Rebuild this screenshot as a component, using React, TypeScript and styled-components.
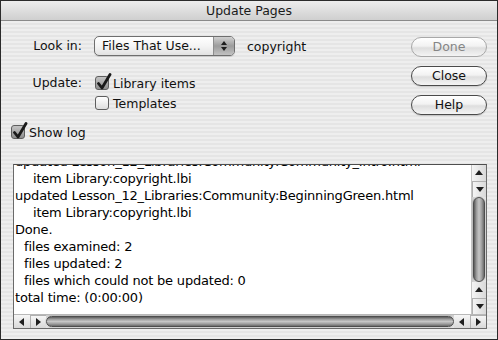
import styled, { createGlobalStyle } from "styled-components";

const GlobalStyle = createGlobalStyle`
  html, body {
    margin: 0;
    padding: 0;
    background: #ffffff;
  }
  body {
    font-family: "DejaVu Sans", "Liberation Sans", sans-serif;
  }
  * {
    box-sizing: border-box;
  }
`;

const Window = styled.div`
  width: 498px;
  height: 340px;
  border: 1px solid #2b2b2b;
  display: flex;
  flex-direction: column;
  overflow: hidden;
  color: #111;
  background: repeating-linear-gradient(
    to bottom,
    #eeeeee 0,
    #eeeeee 2px,
    #e5e5e5 2px,
    #e5e5e5 4px
  );
`;

const TitleBar = styled.div`
  flex: none;
  height: 20px;
  display: flex;
  align-items: center;
  justify-content: center;
  background: linear-gradient(to bottom, #ededed, #cfcfcf);
  border-bottom: 1px solid #8a8a8a;
  font-size: 12.5px;
  color: #1a1a1a;
`;

const Body = styled.div`
  flex: 1;
  display: flex;
  flex-direction: column;
  padding: 15px 10px 10px 10px;
  min-height: 0;
`;

const TopRow = styled.div`
  display: flex;
  justify-content: space-between;
  align-items: flex-start;
`;

const Form = styled.div`
  display: grid;
  grid-template-columns: 71px auto;
  column-gap: 12px;
  row-gap: 18px;
  align-items: start;
`;

const Label = styled.div<{ $h: number }>`
  text-align: right;
  font-size: 12.5px;
  line-height: ${p => p.$h}px;
  white-space: nowrap;
`;

const PopupRow = styled.div`
  display: flex;
  align-items: center;
  gap: 12px;
  height: 20px;
  font-size: 12.5px;
`;

const Popup = styled.div`
  width: 141px;
  height: 20px;
  display: flex;
  border: 1px solid #6e6e6e;
  border-radius: 5px;
  overflow: hidden;
  background: linear-gradient(to bottom, #ffffff 0%, #f4f4f4 50%, #e2e2e2 100%);
  box-shadow: 0 1px 0 rgba(0, 0, 0, 0.12);
`;

const PopupText = styled.div`
  flex: 1;
  padding-left: 7px;
  line-height: 18px;
  font-size: 12.5px;
  white-space: nowrap;
`;

const PopupArrows = styled.div`
  width: 21px;
  display: flex;
  flex-direction: column;
  align-items: center;
  justify-content: center;
  gap: 2px;
  border-left: 1px solid #8e8e8e;
  background: linear-gradient(to bottom, #d0d0d0 0%, #9c9c9c 50%, #c2c2c2 100%);
`;

const CheckGroup = styled.div`
  display: flex;
  flex-direction: column;
  gap: 2px;
  margin-left: 1px;
`;

const CheckRow = styled.div`
  display: flex;
  align-items: center;
  gap: 4px;
  height: 18px;
  font-size: 12.5px;
  white-space: nowrap;
`;

const Box = styled.div<{ $checked?: boolean }>`
  position: relative;
  width: 14px;
  height: 14px;
  border: 1px solid #5e5e5e;
  border-radius: 3px;
  background: ${p =>
    p.$checked
      ? "linear-gradient(to bottom, #c4c4c4, #8e8e8e)"
      : "linear-gradient(to bottom, #ffffff, #dddddd)"};
  svg {
    position: absolute;
    left: 0px;
    top: -4px;
  }
`;

const ButtonColumn = styled.div`
  display: flex;
  flex-direction: column;
  gap: 9px;
  margin-top: 1px;
`;

const PillButton = styled.button`
  width: 76px;
  height: 20px;
  padding: 0;
  border: 1px solid #4a4a4a;
  border-radius: 10px;
  font-family: "DejaVu Sans", "Liberation Sans", sans-serif;
  font-size: 12.5px;
  line-height: 18px;
  color: #111;
  background: linear-gradient(to bottom, #ffffff 0%, #f2f2f2 45%, #dedede 55%, #f4f4f4 100%);
  box-shadow: 0 1px 1px rgba(0, 0, 0, 0.15);
  &:disabled {
    border-color: #a8a8a8;
    color: #858585;
    box-shadow: none;
  }
`;

const ShowLogRow = styled(CheckRow)`
  margin-top: 8px;
  gap: 4px;
`;

const LogBox = styled.div`
  flex: 1;
  min-height: 0;
  margin: 23px 0 0 2px;
  border: 1px solid #6a6a6a;
  border-top-color: #4e4e4e;
  display: grid;
  grid-template-columns: 1fr 15px;
  grid-template-rows: 1fr 14px;
  background: #ffffff;
`;

const LogText = styled.div`
  overflow: hidden;
  padding-left: 1px;
  font-size: 13px;
  letter-spacing: -0.2px;
  line-height: 17px;
  color: #000;
`;

const LogLines = styled.div`
  margin-top: -12px;
`;

const LogLine = styled.div<{ $indent: number }>`
  padding-left: ${p => p.$indent}px;
  white-space: nowrap;
`;

const VScroll = styled.div`
  display: flex;
  flex-direction: column;
  border-left: 1px solid #c4c4c4;
  background: #e6e6e6;
`;

const HScroll = styled.div`
  grid-column: 1 / 3;
  display: flex;
  border-top: 1px solid #b8b8b8;
  background: #e6e6e6;
`;

const ArrowPair = styled.div<{ $vertical?: boolean }>`
  flex: none;
  display: flex;
  flex-direction: ${p => (p.$vertical ? "column" : "row")};
  ${p => (p.$vertical ? "height: 32px;" : "width: 32px;")}
`;

const ArrowButton = styled.div<{ $vertical?: boolean }>`
  flex: 1;
  display: flex;
  align-items: center;
  justify-content: center;
  background: ${p =>
    p.$vertical
      ? "linear-gradient(to right, #f4f4f4, #d9d9d9)"
      : "linear-gradient(to bottom, #f6f6f6, #d9d9d9)"};
  & + & {
    ${p =>
      p.$vertical ? "border-top: 1px solid #b0b0b0;" : "border-left: 1px solid #b0b0b0;"}
  }
`;

const Triangle = styled.div<{ $dir: "up" | "down" | "left" | "right"; $size?: number }>`
  width: 0;
  height: 0;
  ${p => {
    const s = p.$size ?? 4;
    const c = "#1e1e1e";
    if (p.$dir === "up")
      return `border-left: ${s}px solid transparent; border-right: ${s}px solid transparent; border-bottom: ${s + 1}px solid ${c};`;
    if (p.$dir === "down")
      return `border-left: ${s}px solid transparent; border-right: ${s}px solid transparent; border-top: ${s + 1}px solid ${c};`;
    if (p.$dir === "left")
      return `border-top: ${s}px solid transparent; border-bottom: ${s}px solid transparent; border-right: ${s + 1}px solid ${c};`;
    return `border-top: ${s}px solid transparent; border-bottom: ${s}px solid transparent; border-left: ${s + 1}px solid ${c};`;
  }}
`;

const Track = styled.div<{ $vertical?: boolean }>`
  flex: 1;
  display: flex;
  padding: ${p => (p.$vertical ? "0 1px" : "1px 0")};
  background: ${p =>
    p.$vertical
      ? "linear-gradient(to right, #c9c9c9, #efefef 40%, #e2e2e2)"
      : "linear-gradient(to bottom, #c9c9c9, #efefef 40%, #e2e2e2)"};
`;

const Thumb = styled.div<{ $vertical?: boolean }>`
  flex: 1;
  border: 1px solid #4d4d4d;
  border-radius: 7px;
  background: ${p =>
    p.$vertical
      ? "linear-gradient(to right, #5c5c5c 0%, #9c9c9c 25%, #c6c6c6 50%, #a0a0a0 75%, #6a6a6a 100%)"
      : "linear-gradient(to bottom, #5c5c5c 0%, #9c9c9c 25%, #c6c6c6 50%, #a0a0a0 75%, #6a6a6a 100%)"};
  box-shadow: 0 0 0 1px rgba(0, 0, 0, 0.08);
`;

const CheckMark = () => (
  <svg width="16" height="18" viewBox="0 0 16 18">
    <path
      d="M2.5 10.5 L6 15 L14 1.5"
      fill="none"
      stroke="#1a1a1a"
      strokeWidth="2.8"
      strokeLinecap="round"
      strokeLinejoin="round"
    />
  </svg>
);

const LOG_LINES: [number, string][] = [
  [0, "updated Lesson_12_Libraries:Community:Community_Intro.html"],
  [18, "item Library:copyright.lbi"],
  [0, "updated Lesson_12_Libraries:Community:BeginningGreen.html"],
  [18, "item Library:copyright.lbi"],
  [0, "Done."],
  [9, "files examined: 2"],
  [9, "files updated: 2"],
  [9, "files which could not be updated: 0"],
  [0, "total time: (0:00:00)"],
];

function App() {
  return (
    <>
      <GlobalStyle />
      <Window>
        <TitleBar>Update Pages</TitleBar>
        <Body>
          <TopRow>
            <Form>
              <Label $h={20}>Look in:</Label>
              <PopupRow>
                <Popup>
                  <PopupText>Files That Use...</PopupText>
                  <PopupArrows>
                    <Triangle $dir="up" $size={3} />
                    <Triangle $dir="down" $size={3} />
                  </PopupArrows>
                </Popup>
                copyright
              </PopupRow>

              <Label $h={18}>Update:</Label>
              <CheckGroup>
                <CheckRow>
                  <Box $checked>
                    <CheckMark />
                  </Box>
                  Library items
                </CheckRow>
                <CheckRow>
                  <Box />
                  Templates
                </CheckRow>
              </CheckGroup>
            </Form>

            <ButtonColumn>
              <PillButton disabled>Done</PillButton>
              <PillButton>Close</PillButton>
              <PillButton>Help</PillButton>
            </ButtonColumn>
          </TopRow>

          <ShowLogRow>
            <Box $checked>
              <CheckMark />
            </Box>
            Show log
          </ShowLogRow>

          <LogBox>
            <LogText>
              <LogLines>
                {LOG_LINES.map(([indent, text], index) => (
                  <LogLine key={index} $indent={indent}>
                    {text}
                  </LogLine>
                ))}
              </LogLines>
            </LogText>

            <VScroll>
              <ArrowPair $vertical>
                <ArrowButton $vertical>
                  <Triangle $dir="up" />
                </ArrowButton>
                <ArrowButton $vertical>
                  <Triangle $dir="down" />
                </ArrowButton>
              </ArrowPair>
              <Track $vertical>
                <Thumb $vertical />
              </Track>
              <ArrowPair $vertical>
                <ArrowButton $vertical>
                  <Triangle $dir="up" />
                </ArrowButton>
                <ArrowButton $vertical>
                  <Triangle $dir="down" />
                </ArrowButton>
              </ArrowPair>
            </VScroll>

            <HScroll>
              <ArrowPair>
                <ArrowButton>
                  <Triangle $dir="left" />
                </ArrowButton>
                <ArrowButton>
                  <Triangle $dir="right" />
                </ArrowButton>
              </ArrowPair>
              <Track>
                <Thumb />
              </Track>
              <ArrowPair>
                <ArrowButton>
                  <Triangle $dir="left" />
                </ArrowButton>
                <ArrowButton>
                  <Triangle $dir="right" />
                </ArrowButton>
              </ArrowPair>
            </HScroll>
          </LogBox>
        </Body>
      </Window>
    </>
  );
}

export default App;
